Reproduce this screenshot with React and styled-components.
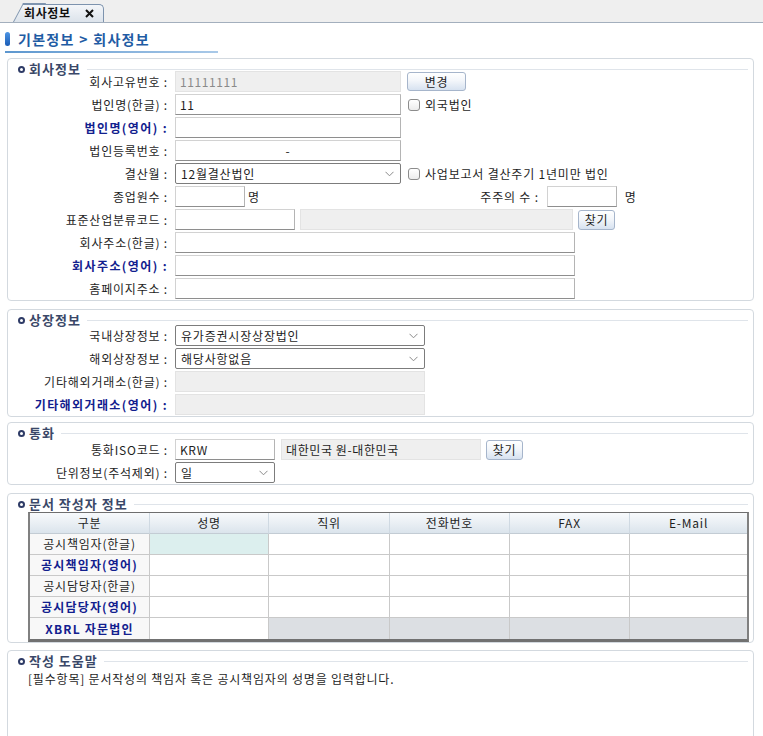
import React from "react";
import styled, { createGlobalStyle } from "styled-components";

const GlobalStyle = createGlobalStyle`
  html, body {
    margin: 0;
    padding: 0;
    background: #ffffff;
  }
  body {
    font-family: "Noto Sans CJK KR", "Noto Sans", sans-serif;
    font-size: 12px;
    letter-spacing: 0.8px;
    color: #1e1e1e;
  }
  * {
    box-sizing: border-box;
  }
`;

const Page = styled.div`
  width: 763px;
  height: 736px;
  overflow: hidden;
  display: flex;
  flex-direction: column;
`;

const TabBar = styled.div`
  height: 23px;
  flex-shrink: 0;
  background: #efefef;
  border-bottom: 1px solid #a3afbd;
  display: flex;
  align-items: flex-end;
  padding-left: 13px;
`;

const tabFill = "linear-gradient(#f4f6f9, #dce3eb)";

const Tab = styled.div`
  position: relative;
  height: 18px;
  padding: 0 10px 0 11px;
  display: flex;
  align-items: center;
  gap: 14px;
  font-weight: 700;
  line-height: 14px;
  letter-spacing: 0.6px;
  color: #111;

  &::before {
    content: "";
    position: absolute;
    left: 0;
    bottom: 0;
    width: 22px;
    height: 100%;
    background: ${tabFill};
    border-left: 1px solid #7d93ae;
    border-top: 1px solid #7d93ae;
    transform: skewX(-28deg);
    transform-origin: bottom left;
  }
  &::after {
    content: "";
    position: absolute;
    left: 10px;
    right: 0;
    top: 0;
    bottom: 0;
    background: ${tabFill};
    border-top: 1px solid #7d93ae;
    border-right: 1px solid #7d93ae;
    border-top-right-radius: 5px;
  }
  & > * {
    position: relative;
    z-index: 1;
  }
`;

const TitleBar = styled.div`
  height: 28px;
  flex-shrink: 0;
  display: flex;
  align-items: center;
  gap: 8px;
  padding: 4px 0 0 5px;
`;

const TitleMark = styled.span`
  width: 5px;
  height: 14px;
  border-radius: 3px;
  background: linear-gradient(#4d95e4, #1a5cb6);
`;

const TitleText = styled.span`
  font-size: 14px;
  font-weight: 700;
  color: #1f5ca4;
  letter-spacing: 1.3px;
  line-height: 18px;
`;

const TitleRule = styled.div`
  margin-left: 5px;
  width: 213px;
  height: 2px;
  flex-shrink: 0;
  background: linear-gradient(to right, #5d97cf, #a9c9e8);
`;

const Content = styled.div`
  padding: 5px 9px 0 7px;
  display: flex;
  flex-direction: column;
`;

const Section = styled.div`
  margin-top: ${(p) => p.$mt || 0}px;
  border: 1px solid #d3d9df;
  border-radius: 4px;
  padding-top: 3px;
  height: ${(p) => (p.$h ? `${p.$h}px` : "auto")};
  flex-shrink: 0;
`;

const SectionHeader = styled.div`
  height: 14px;
  display: flex;
  align-items: center;
  padding: 0 5px 0 10px;
  margin-bottom: ${(p) => p.$mb}px;
`;

const Bullet = styled.span`
  width: 7px;
  height: 7px;
  border-radius: 50%;
  border: 2px solid #2e3b66;
  background: #fff;
  flex-shrink: 0;
`;

const HeaderTitle = styled.span`
  margin-left: 4px;
  font-size: 13px;
  font-weight: 700;
  color: #3a4868;
  white-space: nowrap;
  letter-spacing: 1px;
  line-height: 14px;
`;

const HeaderLine = styled.span`
  flex: 1;
  height: 1px;
  margin-left: 6px;
  background: #dfe4ea;
`;

const Row = styled.div`
  height: 23px;
  display: flex;
  align-items: center;
`;

const Label = styled.span`
  width: ${(p) => p.$w || 160}px;
  margin-right: ${(p) => p.$mr || 7}px;
  flex-shrink: 0;
  text-align: right;
  white-space: nowrap;
  line-height: 16px;
  font-weight: ${(p) => (p.$strong ? 700 : 400)};
  letter-spacing: ${(p) => (p.$strong ? "1.4px" : "0.8px")};
  color: ${(p) => (p.$strong ? "#12208e" : "#1e1e1e")};
`;

const TextBox = styled.input`
  width: ${(p) => p.$w}px;
  height: 21px;
  margin-left: ${(p) => p.$ml || 0}px;
  padding: 0 4px;
  flex-shrink: 0;
  font-family: inherit;
  font-size: 12px;
  letter-spacing: 0.6px;
  text-align: ${(p) => (p.$center ? "center" : "left")};
  color: ${(p) => (p.$muted ? "#8a8a8a" : "#1e1e1e")};
  background: ${(p) => (p.$off ? "#efefef" : "#ffffff")};
  border: 1px solid ${(p) => (p.$off ? "#e3e3e3" : "#d2d2d2")};
  border-bottom-color: ${(p) => (p.$off ? "#e3e3e3" : "#8e8e8e")};
  border-right-color: ${(p) => (p.$off ? "#e3e3e3" : "#b4b4b4")};
  outline: none;
`;

const SelectBox = styled.div`
  width: ${(p) => p.$w}px;
  height: 21px;
  flex-shrink: 0;
  display: flex;
  align-items: center;
  justify-content: space-between;
  padding: 0 6px 0 5px;
  border: 1px solid #7c7c7c;
  border-radius: 2px;
  background: #fff;
  line-height: 16px;
`;

const Button = styled.button`
  width: ${(p) => p.$w}px;
  height: ${(p) => p.$h || 20}px;
  margin-left: ${(p) => p.$ml || 5}px;
  padding: 0;
  flex-shrink: 0;
  font-family: inherit;
  font-size: 12px;
  letter-spacing: 0.8px;
  color: #1e1e1e;
  border: 1px solid #a6b5cb;
  border-radius: 3px;
  background: linear-gradient(#ffffff 0%, #f3f6fa 45%, #d7e2f0 100%);
`;

const CheckLabel = styled.label`
  margin-left: 7px;
  display: flex;
  align-items: center;
  gap: 5px;
  white-space: nowrap;
  line-height: 16px;
`;

const CheckBox = styled.span`
  width: 12px;
  height: 12px;
  border: 1px solid #8c8c8c;
  border-radius: 3px;
  background: linear-gradient(#ffffff, #ececec);
`;

const Unit = styled.span`
  margin-left: ${(p) => p.$ml || 3}px;
  line-height: 16px;
`;

const Grid = styled.table`
  margin: 1px 4px 0 20px;
  width: 721px;
  border-collapse: separate;
  border-spacing: 0;
  table-layout: fixed;
  border-top: 1px solid #6e6e6e;
  border-left: 2px solid #808080;
  border-right: 2px solid #808080;
  border-bottom: 3px solid #717171;
`;

const HeadRow = styled.tr`
  height: 21px;
`;

const BodyRow = styled.tr`
  height: 21px;
`;

const Th = styled.th`
  width: ${(p) => (p.$w ? `${p.$w}px` : "auto")};
  padding: 0;
  font-weight: 400;
  text-align: center;
  line-height: 16px;
  background: linear-gradient(#f8fafc, #dbe4ec);
  border-right: 1px solid #cfd9e2;
  border-bottom: 1px solid #c3ccd4;
  &:last-child {
    border-right: none;
  }
`;

const Td = styled.td`
  padding: 0;
  text-align: center;
  line-height: 16px;
  white-space: nowrap;
  font-weight: ${(p) => (p.$strong ? 700 : 400)};
  letter-spacing: ${(p) => (p.$strong ? "1.2px" : "0.8px")};
  color: ${(p) => (p.$strong ? "#12208e" : "#1e1e1e")};
  background: ${(p) => p.$bg || "#ffffff"};
  border-right: 1px solid #c9c9c9;
  border-bottom: 1px solid #c9c9c9;
  &:last-child {
    border-right: none;
  }
  tr:last-child > & {
    border-bottom: none;
  }
`;

const HelpText = styled.div`
  padding-left: 20px;
  line-height: 14px;
  margin-top: 4px;
`;

function Chevron() {
  return (
    <svg width="9" height="6" viewBox="0 0 9 6">
      <path d="M0.5 0.8 L4.5 4.8 L8.5 0.8" fill="none" stroke="#8a8a8a" strokeWidth="1" />
    </svg>
  );
}

function CloseIcon() {
  return (
    <svg width="9" height="9" viewBox="0 0 9 9">
      <path d="M1 1 L8 8 M8 1 L1 8" stroke="#111" strokeWidth="2" />
    </svg>
  );
}

function Select({ w, value }) {
  return (
    <SelectBox $w={w}>
      <span>{value}</span>
      <Chevron />
    </SelectBox>
  );
}

function Check({ text }) {
  return (
    <CheckLabel>
      <CheckBox />
      {text}
    </CheckLabel>
  );
}

function Header({ title, mb }) {
  return (
    <SectionHeader $mb={mb}>
      <Bullet />
      <HeaderTitle>{title}</HeaderTitle>
      <HeaderLine />
    </SectionHeader>
  );
}

const writers = [
  { name: "공시책임자(한글)", strong: false },
  { name: "공시책임자(영어)", strong: true },
  { name: "공시담당자(한글)", strong: false },
  { name: "공시담당자(영어)", strong: true },
  { name: "XBRL 자문법인", strong: true, xbrl: true }
];

export default function App() {
  return (
    <Page>
      <GlobalStyle />
      <TabBar>
        <Tab>
          <span>회사정보</span>
          <CloseIcon />
        </Tab>
      </TabBar>
      <TitleBar>
        <TitleMark />
        <TitleText>기본정보 &gt; 회사정보</TitleText>
      </TitleBar>
      <TitleRule />

      <Content>
        <Section>
          <Header title="회사정보" mb={-6} />
          <Row>
            <Label>회사고유번호 :</Label>
            <TextBox $w={226} $off $muted defaultValue="11111111" readOnly />
            <Button $w={59} $h={19} $ml={6}>변경</Button>
          </Row>
          <Row>
            <Label>법인명(한글) :</Label>
            <TextBox $w={226} defaultValue="11" />
            <Check text="외국법인" />
          </Row>
          <Row>
            <Label $strong>법인명(영어) :</Label>
            <TextBox $w={226} />
          </Row>
          <Row>
            <Label>법인등록번호 :</Label>
            <TextBox $w={226} $center defaultValue="-" />
          </Row>
          <Row>
            <Label>결산월 :</Label>
            <Select w={226} value="12월결산법인" />
            <Check text="사업보고서 결산주기 1년미만 법인" />
          </Row>
          <Row>
            <Label>종업원수 :</Label>
            <TextBox $w={70} />
            <Unit>명</Unit>
            <Label $w={279} $mr={8}>주주의 수 :</Label>
            <TextBox $w={70} />
            <Unit $ml={8}>명</Unit>
          </Row>
          <Row>
            <Label>표준산업분류코드 :</Label>
            <TextBox $w={120} />
            <TextBox $w={273} $ml={5} $off readOnly />
            <Button $w={37}>찾기</Button>
          </Row>
          <Row>
            <Label>회사주소(한글) :</Label>
            <TextBox $w={400} />
          </Row>
          <Row>
            <Label $strong>회사주소(영어) :</Label>
            <TextBox $w={400} />
          </Row>
          <Row>
            <Label>홈페이지주소 :</Label>
            <TextBox $w={400} />
          </Row>
        </Section>

        <Section $mt={8}>
          <Header title="상장정보" mb={-3} />
          <Row>
            <Label>국내상장정보 :</Label>
            <Select w={250} value="유가증권시장상장법인" />
          </Row>
          <Row>
            <Label>해외상장정보 :</Label>
            <Select w={250} value="해당사항없음" />
          </Row>
          <Row>
            <Label>기타해외거래소(한글) :</Label>
            <TextBox $w={250} $off readOnly />
          </Row>
          <Row>
            <Label $strong>기타해외거래소(영어) :</Label>
            <TextBox $w={250} $off readOnly />
          </Row>
        </Section>

        <Section $mt={5}>
          <Header title="통화" mb={-2} />
          <Row>
            <Label>통화ISO코드 :</Label>
            <TextBox $w={100} defaultValue="KRW" />
            <TextBox $w={200} $ml={6} $off readOnly defaultValue="대한민국 원-대한민국" />
            <Button $w={37}>찾기</Button>
          </Row>
          <Row>
            <Label>단위정보(주석제외) :</Label>
            <Select w={100} value="일" />
          </Row>
        </Section>

        <Section $mt={8}>
          <Header title="문서 작성자 정보" mb={1} />
          <Grid>
            <thead>
              <HeadRow>
                <Th $w={120}>구분</Th>
                <Th $w={119}>성명</Th>
                <Th $w={121}>직위</Th>
                <Th $w={120}>전화번호</Th>
                <Th $w={120}>FAX</Th>
                <Th>E-Mail</Th>
              </HeadRow>
            </thead>
            <tbody>
              {writers.map((w, i) => (
                <BodyRow key={w.name}>
                  <Td $strong={w.strong} $bg="#f8f8f8">{w.name}</Td>
                  <Td $bg={i === 0 ? "#dcefee" : undefined} />
                  {[0, 1, 2, 3].map((c) => (
                    <Td key={c} $bg={w.xbrl ? "#dcdfe3" : undefined} />
                  ))}
                </BodyRow>
              ))}
            </tbody>
          </Grid>
        </Section>

        <Section $mt={7} $h={120}>
          <Header title="작성 도움말" mb={0} />
          <HelpText>[필수항목] 문서작성의 책임자 혹은 공시책임자의 성명을 입력합니다.</HelpText>
        </Section>
      </Content>
    </Page>
  );
}
